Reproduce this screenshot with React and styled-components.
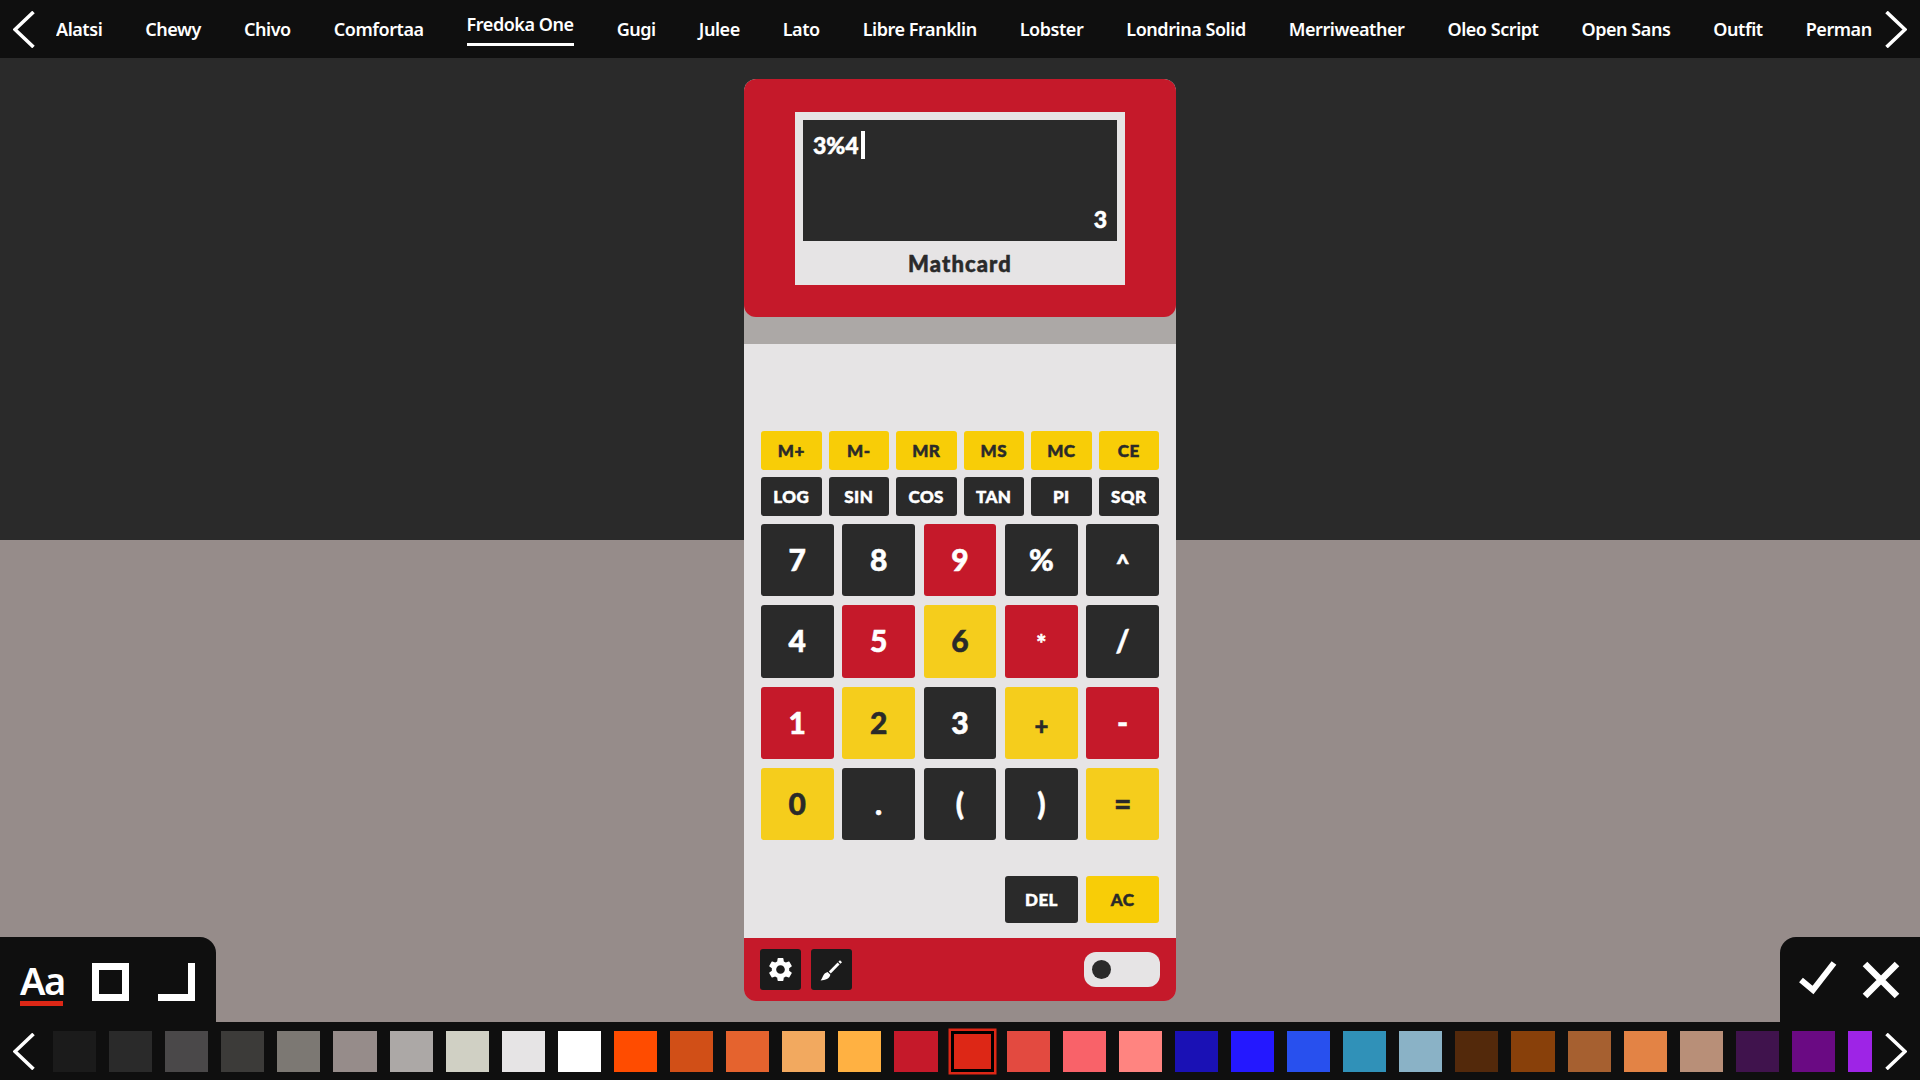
import React from 'react';
import styled, { createGlobalStyle } from 'styled-components';
import { MdSettings } from 'react-icons/md';

const fonts = [
  'Alatsi', 'Chewy', 'Chivo', 'Comfortaa', 'Fredoka One', 'Gugi', 'Julee', 'Lato',
  'Libre Franklin', 'Lobster', 'Londrina Solid', 'Merriweather', 'Oleo Script',
  'Open Sans', 'Outfit', 'Permanent Marker',
];

const memoryKeys = ['M+', 'M-', 'MR', 'MS', 'MC', 'CE'];
const mathKeys = ['LOG', 'SIN', 'COS', 'TAN', 'PI', 'SQR'];
const keys = [
  ['7', 'dark'], ['8', 'dark'], ['9', 'red'], ['%', 'dark'], ['^', 'dark', true],
  ['4', 'dark'], ['5', 'red'], ['6', 'yellow'], ['*', 'red', true], ['/', 'dark'],
  ['1', 'red'], ['2', 'yellow'], ['3', 'dark'], ['+', 'yellow', true], ['-', 'red'],
  ['0', 'yellow'], ['.', 'dark'], ['(', 'dark'], [')', 'dark'], ['=', 'yellow'],
];

const swatches = [
  '#1b1b1b', '#2a2a2a', '#4a4849', '#3c3b39', '#7c7873', '#968c8a', '#aca8a6', '#d0d0c4',
  '#e6e4e5', '#ffffff', '#ff4c00', '#d14f17', '#e5632e', '#f2a95f', '#ffb142', '#c5192a',
  '#dd2716', '#e34a40', '#f96269', '#ff8480', '#1a11b5', '#2418ff', '#2850ee', '#3091b8',
  '#8ab2c6', '#53290b', '#88400a', '#a66030', '#e38345', '#b88f78', '#40134d', '#6a0a83',
  '#9e24e6',
];

const Chevron = ({ right }) => (
  <svg width="22" height="37" viewBox="0 0 22 37" fill="none">
    <path
      d={right ? 'M1.5 1 L20 18.5 L1.5 36' : 'M20.5 1 L2 18.5 L20.5 36'}
      stroke="#fff"
      strokeWidth="3.6"
    />
  </svg>
);

const BrushIcon = () => (
  <svg width="23" height="22" viewBox="0 0 23 22" fill="#fff">
    <path d="M20 1.2 L22 3.2 L20.4 4.8 L18.4 2.8 Z" />
    <path d="M17.6 3.6 L19.6 5.6 L10.8 14.4 L8.8 12.4 Z" />
    <path d="M7.6 13 L10.4 15.8 C9.6 19.6 5.4 21.4 0.6 21.4 C2.8 19.4 2.6 14.4 7.6 13 Z" />
  </svg>
);

export default () => (
  <Page>
    <GlobalStyle />
    <TopBar>
      <LeftArrow><Chevron /></LeftArrow>
      <FontList>
        {fonts.map(name => (
          <FontItem key={name} $active={name === 'Fredoka One'}>{name}</FontItem>
        ))}
      </FontList>
      <RightArrow><Chevron right /></RightArrow>
    </TopBar>
    <Stage>
      <Calculator>
        <Header>
          <Frame>
            <Screen>
              <Expression>3%4<Caret /></Expression>
              <Result>3</Result>
            </Screen>
            <Label>Mathcard</Label>
          </Frame>
        </Header>
        <Band />
        <Body>
          <SmallGrid>
            {memoryKeys.map(k => <SmallKey key={k} $kind="yellow">{k}</SmallKey>)}
            {mathKeys.map(k => <SmallKey key={k} $kind="dark">{k}</SmallKey>)}
          </SmallGrid>
          <BigGrid>
            {keys.map(([k, kind, small]) => (
              <BigKey key={k} $kind={kind} $small={small}>{k}</BigKey>
            ))}
          </BigGrid>
          <ClearRow>
            <ClearKey $kind="dark">DEL</ClearKey>
            <ClearKey $kind="yellow">AC</ClearKey>
          </ClearRow>
        </Body>
        <Footer>
          <IconKey><MdSettings size={29} /></IconKey>
          <IconKey><BrushIcon /></IconKey>
          <Toggle><Knob /></Toggle>
        </Footer>
      </Calculator>
      <ToolPanel>
        <FontTool>Aa</FontTool>
        <svg width="37" height="38" viewBox="0 0 37 38" fill="none">
          <rect x="3.5" y="3.5" width="30" height="31" stroke="#fff" strokeWidth="7" />
        </svg>
        <svg width="37" height="38" viewBox="0 0 37 38" fill="none">
          <path d="M33.5 0 V34.5 H0" stroke="#fff" strokeWidth="7" />
        </svg>
      </ToolPanel>
      <ActionPanel>
        <svg width="38" height="34" viewBox="0 0 38 34" fill="none">
          <path d="M2 19 L14 29 L35 2" stroke="#fff" strokeWidth="6" />
        </svg>
        <svg width="38" height="38" viewBox="0 0 38 38" fill="none">
          <path d="M3 3 L35 35 M35 3 L3 35" stroke="#fff" strokeWidth="6.5" />
        </svg>
      </ActionPanel>
    </Stage>
    <Palette>
      <PaletteLeftArrow><Chevron /></PaletteLeftArrow>
      <SwatchList>
        {swatches.map(c => (
          <Swatch key={c} $color={c} $selected={c === '#dd2716'} />
        ))}
      </SwatchList>
      <RightArrow><Chevron right /></RightArrow>
    </Palette>
  </Page>
);

const GlobalStyle = createGlobalStyle`
  html, body {
    margin: 0;
    padding: 0;
    overflow: hidden;
  }
  * {
    box-sizing: border-box;
  }
`;

const colors = {
  dark: { bg: '#2a2a2a', fg: '#fff' },
  red: { bg: '#c5192a', fg: '#fff' },
  yellow: { bg: '#f5cd1c', fg: '#2a2a2a' },
};

const Page = styled.div`
  width: 1920px;
  height: 1080px;
  display: flex;
  flex-direction: column;
  overflow: hidden;
  background: linear-gradient(#2a2a2a 540px, #968c8a 540px);
`;

const TopBar = styled.div`
  height: 58px;
  flex-shrink: 0;
  display: flex;
  align-items: center;
  background-color: #0f0f0f;
`;

const LeftArrow = styled.div`
  width: 56px;
  flex-shrink: 0;
  padding-left: 13px;
  display: flex;
`;

const PaletteLeftArrow = styled(LeftArrow)`
  width: 53px;
`;

const RightArrow = styled.div`
  width: 48px;
  flex-shrink: 0;
  padding-left: 13px;
  display: flex;
`;

const FontList = styled.div`
  flex-grow: 1;
  min-width: 0;
  height: 100%;
  display: flex;
  align-items: center;
  gap: 43px;
  overflow: hidden;
  white-space: nowrap;
  font-family: 'Noto Sans', sans-serif;
  font-weight: 600;
  font-size: 18px;
  letter-spacing: -0.45px;
  color: #fff;
`;

const FontItem = styled.div`
  flex-shrink: 0;
  padding-bottom: ${props => (props.$active ? '7px' : '0')};
  margin-top: ${props => (props.$active ? '-1px' : '0')};
  border-bottom: ${props => (props.$active ? '3px solid #fff' : 'none')};
`;

const Stage = styled.div`
  position: relative;
  flex-grow: 1;
  display: flex;
  justify-content: center;
  padding-top: 21px;
`;

const Calculator = styled.div`
  width: 432px;
  height: 922px;
  display: flex;
  flex-direction: column;
  overflow: hidden;
  border-radius: 12px;
  background-color: #aca8a6;
  font-family: 'Lato', sans-serif;
  font-weight: 900;
  -webkit-text-stroke: 0.5px currentColor;
`;

const Header = styled.div`
  height: 238px;
  flex-shrink: 0;
  padding-top: 33px;
  display: flex;
  justify-content: center;
  border-radius: 12px;
  background-color: #c5192a;
`;

const Frame = styled.div`
  width: 330px;
  height: 173px;
  padding: 8px 8px 0;
  display: flex;
  flex-direction: column;
  background-color: #e6e4e5;
`;

const Screen = styled.div`
  height: 121px;
  flex-shrink: 0;
  padding: 11px 10px 8px;
  display: flex;
  flex-direction: column;
  justify-content: space-between;
  background-color: #2a2a2a;
  color: #fff;
  font-size: 23px;
`;

const Expression = styled.div`
  display: flex;
  align-items: center;
  gap: 2px;
  height: 28px;
`;

const Caret = styled.span`
  width: 4px;
  height: 28px;
  background-color: #fff;
`;

const Result = styled.div`
  text-align: right;
  line-height: 28px;
`;

const Label = styled.div`
  flex-grow: 1;
  display: flex;
  align-items: center;
  justify-content: center;
  font-size: 22px;
  letter-spacing: 1.1px;
  color: #2a2a2a;
`;

const Band = styled.div`
  height: 27px;
  flex-shrink: 0;
`;

const Body = styled.div`
  flex-grow: 1;
  padding: 87px 17px 15px;
  display: flex;
  flex-direction: column;
  background-color: #e6e4e5;
`;

const SmallGrid = styled.div`
  display: grid;
  grid-template-columns: repeat(6, 1fr);
  grid-auto-rows: 39px;
  gap: 7px;
`;

const SmallKey = styled.div`
  display: flex;
  align-items: center;
  justify-content: center;
  border-radius: 3px;
  font-size: 17px;
  letter-spacing: 0.4px;
  background-color: ${props => (props.$kind === 'yellow' ? '#f8cd07' : '#2a2a2a')};
  color: ${props => colors[props.$kind].fg};
`;

const BigGrid = styled.div`
  margin-top: 8px;
  display: grid;
  grid-template-columns: repeat(5, 1fr);
  grid-auto-rows: 72.25px;
  gap: 9px 8.75px;
`;

const BigKey = styled.div`
  display: flex;
  align-items: center;
  justify-content: center;
  border-radius: 3px;
  font-size: ${props => (props.$small ? '24px' : '30px')};
  padding: ${props => (props.$small ? '5px 0 0' : '0 0 2px')};
  background-color: ${props => colors[props.$kind].bg};
  color: ${props => colors[props.$kind].fg};
`;

const ClearRow = styled.div`
  margin-top: 36px;
  display: flex;
  justify-content: flex-end;
  gap: 8px;
`;

const ClearKey = styled.div`
  width: 73px;
  height: 47px;
  display: flex;
  align-items: center;
  justify-content: center;
  border-radius: 3px;
  font-size: 17px;
  letter-spacing: 0.4px;
  background-color: ${props => (props.$kind === 'yellow' ? '#f8cd07' : '#2a2a2a')};
  color: ${props => colors[props.$kind].fg};
`;

const Footer = styled.div`
  height: 63px;
  flex-shrink: 0;
  padding: 0 16px;
  display: flex;
  align-items: center;
  gap: 10px;
  background-color: #c5192a;
`;

const IconKey = styled.div`
  width: 41px;
  height: 41px;
  display: flex;
  align-items: center;
  justify-content: center;
  border-radius: 3px;
  background-color: #1b1b1b;
  color: #fff;
`;

const Toggle = styled.div`
  width: 76px;
  height: 35px;
  margin-left: auto;
  padding-left: 8px;
  display: flex;
  align-items: center;
  border-radius: 12px;
  background-color: #e6e4e5;
`;

const Knob = styled.div`
  width: 19px;
  height: 19px;
  border-radius: 50%;
  background-color: #2a2a2a;
`;

const ToolPanel = styled.div`
  position: absolute;
  left: 0;
  bottom: 0;
  width: 216px;
  height: 85px;
  padding: 26px 20px 0;
  display: flex;
  align-items: flex-start;
  gap: 29px;
  border-top-right-radius: 16px;
  background-color: #0f0f0f;
`;

const FontTool = styled.div`
  width: 43px;
  height: 43px;
  border-bottom: 5px solid #dd2716;
  font-family: 'Noto Sans', sans-serif;
  font-weight: 600;
  font-size: 38px;
  line-height: 34px;
  letter-spacing: -1.5px;
  color: #fff;
  text-align: center;
`;

const ActionPanel = styled.div`
  position: absolute;
  right: 0;
  bottom: 0;
  width: 140px;
  height: 85px;
  padding: 24px 20px 0 19px;
  display: flex;
  align-items: flex-start;
  justify-content: space-between;
  border-top-left-radius: 16px;
  background-color: #0f0f0f;
`;

const Palette = styled.div`
  height: 58px;
  flex-shrink: 0;
  display: flex;
  align-items: center;
  background-color: #0f0f0f;
`;

const SwatchList = styled.div`
  flex-grow: 1;
  min-width: 0;
  padding: 6px 0;
  display: flex;
  align-items: center;
  gap: 13px;
  overflow: hidden;
`;

const Swatch = styled.div`
  width: 43.1px;
  height: 41px;
  flex-shrink: 0;
  background-color: ${props => props.$color};
  ${props => props.$selected && `
    border: 3px solid #000;
    box-shadow: 0 0 0 2.5px #dd2716;
  `}
`;
